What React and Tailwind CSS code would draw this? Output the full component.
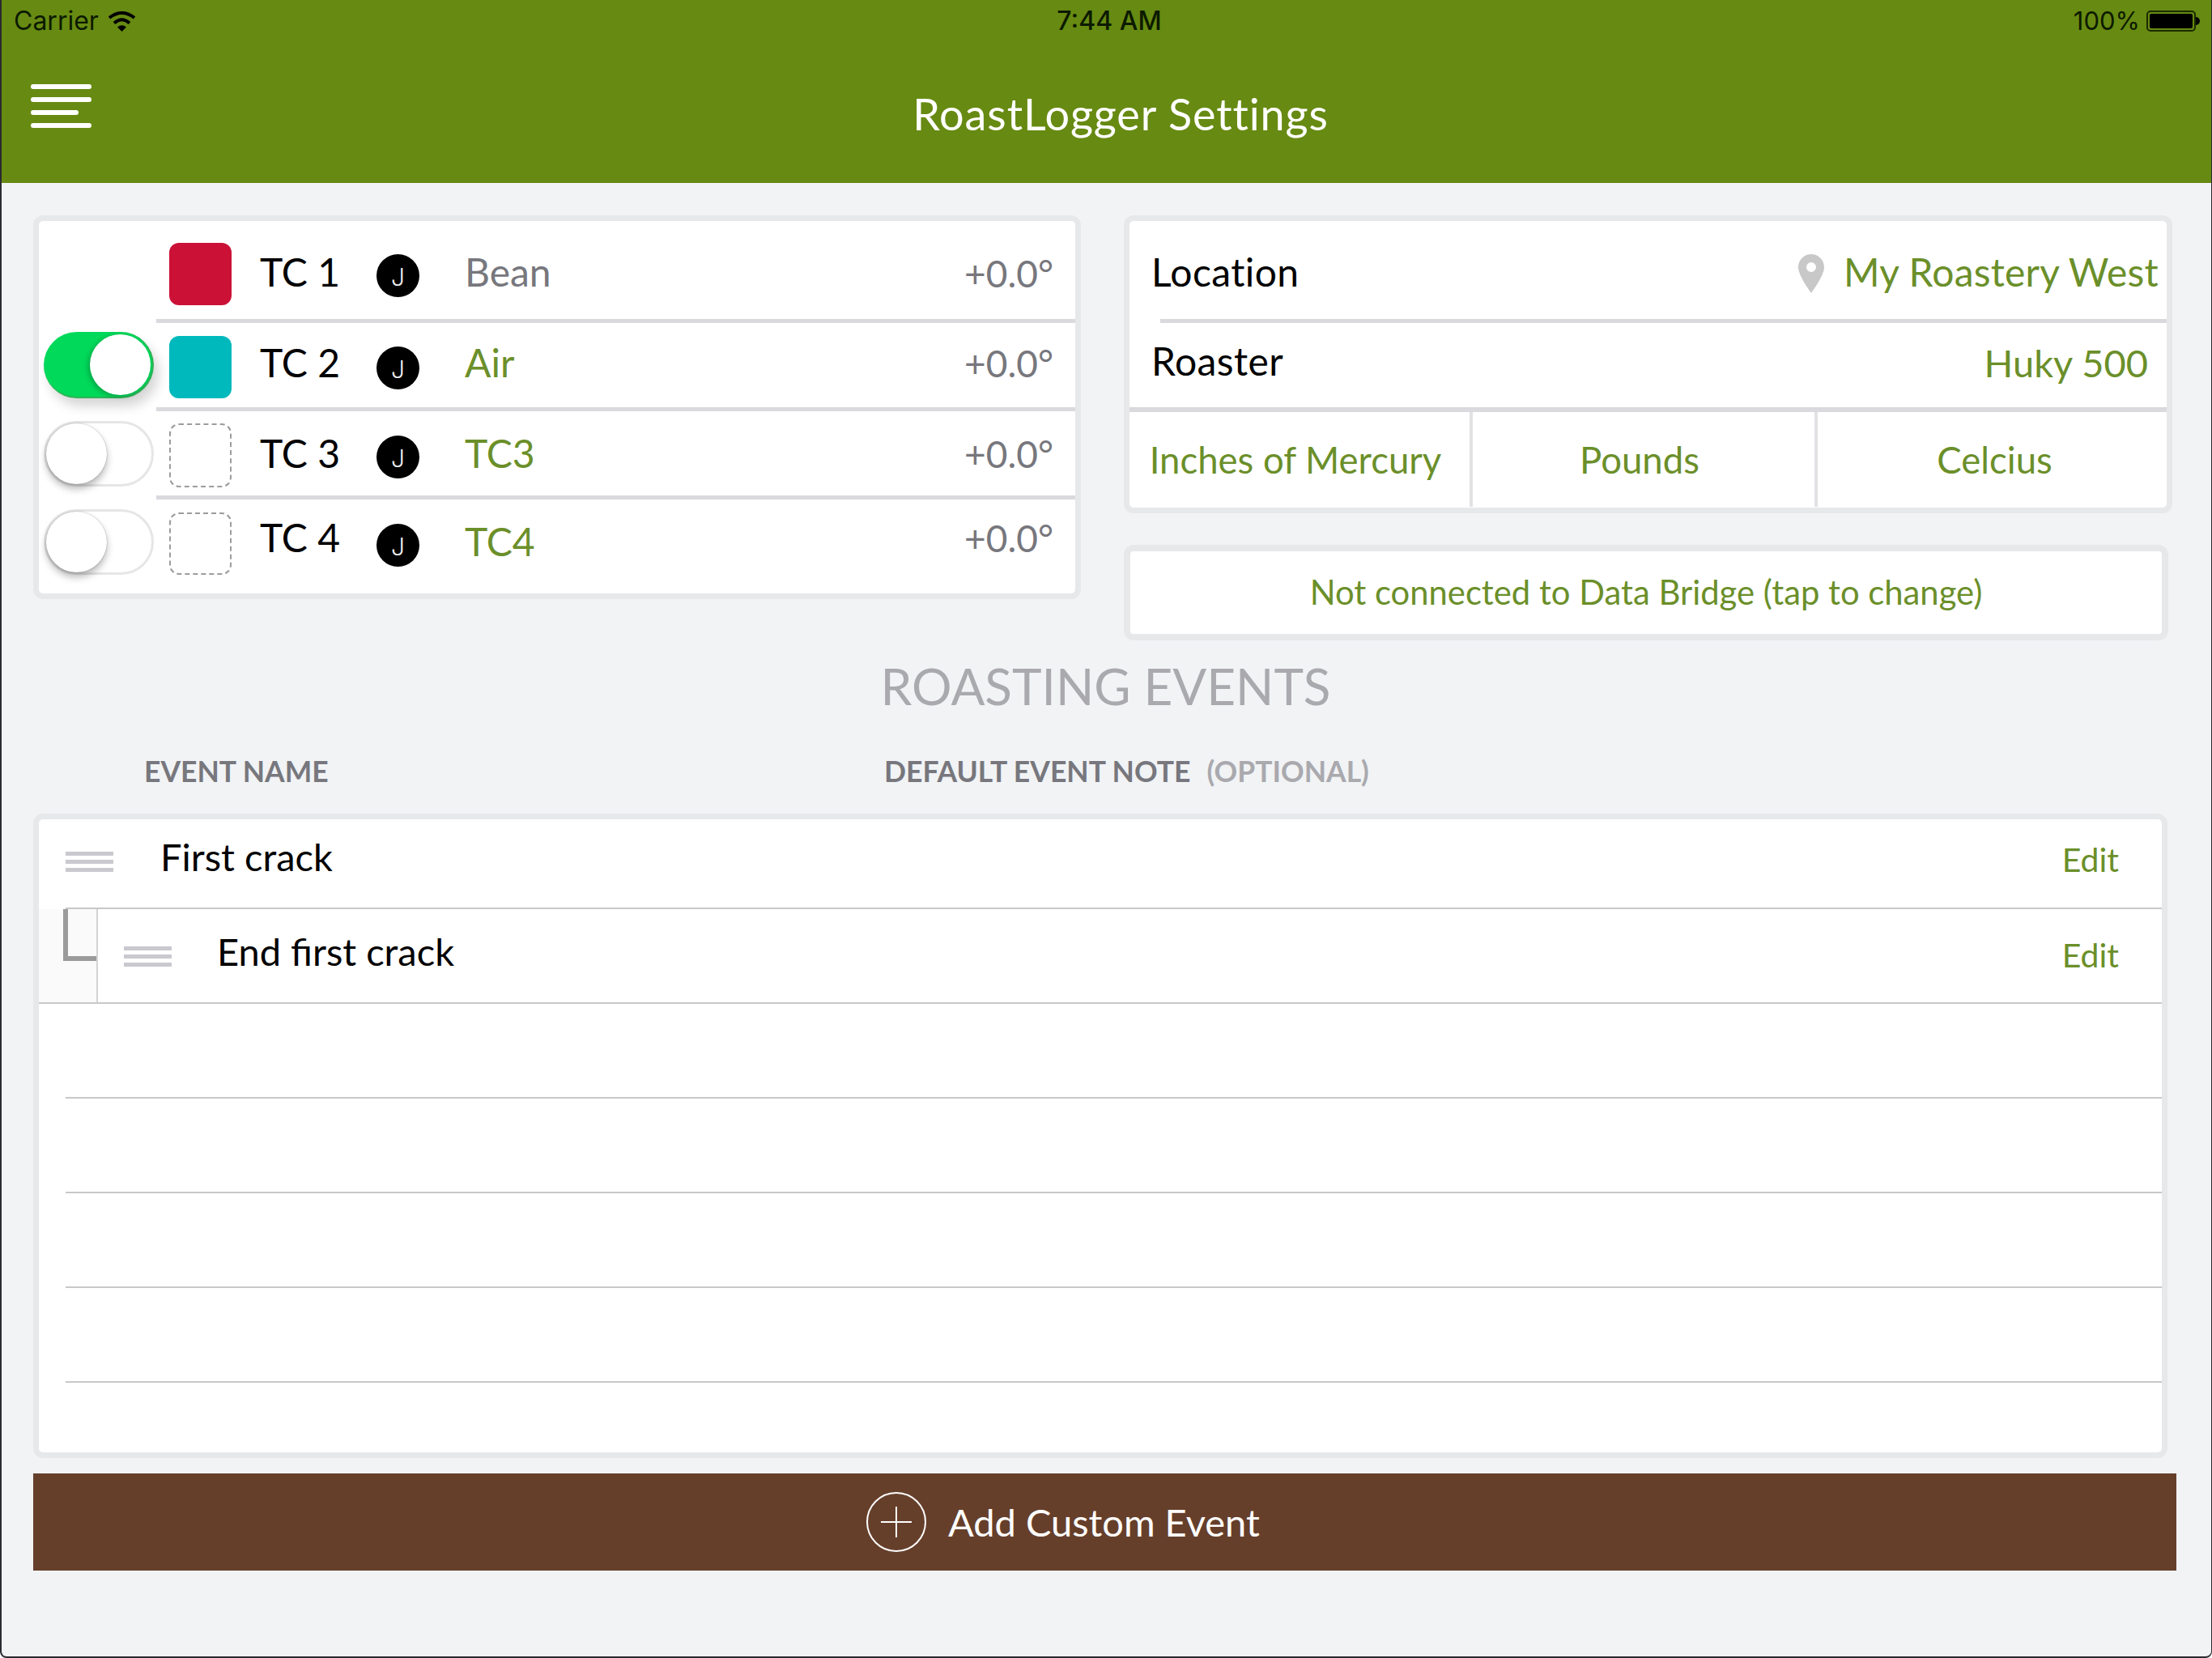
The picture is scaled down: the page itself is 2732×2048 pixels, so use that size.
const AV = "font-['Lato','Liberation_Sans',sans-serif]";

const rows = [
  { h: "h-[121px]", sw: null, swT: "", sq: "mt-[27px] h-[77px] bg-[#cb1136]", txt: "mt-[33px]", j: "mt-[41px]", name: "Bean", nameC: "text-[#77777d]", nameT: "mt-[33px]", val: "mt-[35px]", label: "TC 1" },
  { h: "h-[104px]", sw: true, swT: "mt-[11px]", sq: "mt-[16px] h-[77px] bg-[#00b9bc]", txt: "mt-[19px]", j: "mt-[29px]", name: "Air", nameC: "text-[#6b8f2a]", nameT: "mt-[19px]", val: "mt-[20px]", label: "TC 2" },
  { h: "h-[104px]", sw: false, swT: "mt-[12px]", sq: "mt-[15px] h-[79px] border-2 border-dashed border-[#9c9c9c]", txt: "mt-[22px]", j: "mt-[30px]", name: "TC3", nameC: "text-[#6b8f2a]", nameT: "mt-[22px]", val: "mt-[23px]", label: "TC 3" },
  { h: "h-[115px]", sw: false, swT: "mt-[12px]", sq: "mt-[16px] h-[77px] border-2 border-dashed border-[#9c9c9c]", txt: "mt-[17px]", j: "mt-[30px]", name: "TC4", nameC: "text-[#6b8f2a]", nameT: "mt-[22px]", val: "mt-[18px]", label: "TC 4" },
];

function Toggle({ on, className }) {
  if (on) {
    return (
      <div className={`w-[136px] h-[82px] shrink-0 rounded-full bg-[#00d95a] border-r-2 border-b-2 border-[#2fb457] flex justify-end items-center pr-[2px] shadow-[6px_10px_14px_rgba(0,0,0,0.16)] ${className}`}>
        <div className="w-[75px] h-[75px] rounded-full bg-white shadow-[-2px_2px_6px_rgba(0,0,0,0.25)]" />
      </div>
    );
  }
  return (
    <div className={`w-[136px] h-[81px] shrink-0 rounded-full bg-white border-[3px] border-[#e6e6e6] flex items-center ${className}`}>
      <div className="w-[75px] h-[75px] rounded-full bg-white shadow-[0_6px_10px_rgba(0,0,0,0.28),0_0_2px_rgba(0,0,0,0.3)]" />
    </div>
  );
}

function Handle({ className }) {
  return (
    <div className={`w-[59px] flex flex-col gap-[5px] shrink-0 ${className}`}>
      <div className="h-[5px] bg-[#c9c9cf]" />
      <div className="h-[5px] bg-[#c9c9cf]" />
      <div className="h-[5px] bg-[#c9c9cf]" />
    </div>
  );
}

function Divider({ className }) {
  return <div className={`h-[5px] bg-[#d9d9de] ${className}`} />;
}

function ChannelPanel() {
  return (
    <div className="w-[1294px] h-[474px] shrink-0 rounded-xl border-[7px] border-[#e7e8ea] bg-white overflow-hidden">
      {rows.map((r, i) => (
        <div key={r.label}>
          <div className={`${r.h} flex items-start`}>
            <div className="w-[142px] pl-[6px] shrink-0">
              {r.sw !== null && <Toggle on={r.sw} className={r.swT} />}
            </div>
            <div className={`ml-[19px] w-[77px] shrink-0 rounded-xl ${r.sq}`} />
            <div className={`ml-[35px] w-[144px] shrink-0 text-[48px] leading-[60px] text-black ${r.txt}`}>{r.label}</div>
            <div className={`w-[53px] h-[53px] shrink-0 rounded-full bg-black text-[#eeeeee] flex items-center justify-center pt-[3px] text-[30px] font-['Inter',sans-serif] font-light ${r.j}`}>J</div>
            <div className={`ml-[56px] flex-1 text-[48px] leading-[60px] ${r.nameC} ${r.nameT}`}>{r.name}</div>
            <div className={`mr-[27px] text-[46px] leading-[60px] text-[#77777d] ${r.val}`}>+0.0°</div>
          </div>
          {i < 3 && <Divider className="ml-[145px]" />}
        </div>
      ))}
    </div>
  );
}

function SettingsPanel() {
  return (
    <div className="w-[1295px] h-[368px] rounded-xl border-[7px] border-[#e7e8ea] bg-white overflow-hidden">
      <div className="h-[121px] flex items-start">
        <div className="ml-[27px] mt-[33px] text-[48px] tracking-[0.4px] leading-[60px] text-black">Location</div>
        <svg className="ml-auto mt-[41px] w-[32px] h-[48px]" viewBox="0 0 32 48">
          <path fillRule="evenodd" fill="#c8c8c8" d="M16 0C7 0 0 7 0 16c0 9 11 25 16 32 5-7 16-23 16-32C32 7 25 0 16 0Zm0 10a6 6 0 1 1 0 12 6 6 0 0 1 0-12Z" />
        </svg>
        <div className="ml-[24px] mr-[10px] mt-[33px] text-[48px] tracking-[0.2px] leading-[60px] text-[#6b8f2a]">My Roastery West</div>
      </div>
      <Divider className="ml-[38px]" />
      <div className="h-[104px] flex items-start justify-between">
        <div className="ml-[27px] mt-[17px] text-[48px] tracking-[0.4px] leading-[60px] text-black">Roaster</div>
        <div className="mr-[23px] mt-[19px] text-[47px] leading-[60px] text-[#6b8f2a]">Huky 500</div>
      </div>
      <div className="h-[6px] bg-[#d9d9de]" />
      <div className="flex h-[117px] text-[45.500px] leading-[60px] text-[#6b8f2a] text-center">
        <div className="w-[420px] pt-[29px] pr-[10px]">Inches of Mercury</div>
        <div className="w-[4px] bg-[#e2e2e5]" />
        <div className="w-[422px] pt-[29px] pr-[10px]">Pounds</div>
        <div className="w-[4px] bg-[#e2e2e5]" />
        <div className="flex-1 pt-[29px] pl-[6px]">Celcius</div>
      </div>
    </div>
  );
}

export default function App() {
  return (
    <div className={`w-[2732px] h-[2048px] bg-[#f1f3f5] border-l-2 border-r border-b-2 border-[#2a2a30] rounded-b-lg overflow-hidden flex flex-col ${AV}`}>
      <header className="h-[226px] shrink-0 bg-[#678a12] flex flex-col">
        <div className="h-[52px] grid grid-cols-3 items-center text-[32px] text-[#0c1a00] font-['Inter',sans-serif] pl-[15px] pr-[14px]">
          <div className="flex items-center gap-[12px]">
            <span>Carrier</span>
            <svg className="w-[33px] h-[25px]" viewBox="0 0 33 25" fill="none" stroke="#000">
              <path strokeWidth="4" d="M1 8Q16.5-4 32 8" />
              <path strokeWidth="4" d="M7 14.500Q16.500 6 26 14.500" />
              <path fill="#000" stroke="none" d="M11 19.500Q16.500 15 22 19.500L16.500 25Z" />
            </svg>
          </div>
          <div className="text-center font-medium pl-[6px]">7:44 AM</div>
          <div className="flex items-center justify-end gap-[8px]">
            <span className="text-[31px]">100%</span>
            <div className="flex items-center">
              <div className="w-[61px] h-[26px] rounded-[5px] border-2 border-[#1c2a00] p-[2px]">
                <div className="w-full h-full rounded-[2px] bg-black" />
              </div>
              <div className="w-[5px] h-[10px] rounded-r-full bg-black" />
            </div>
          </div>
        </div>
        <div className="flex items-start">
          <div className="ml-[36px] mt-[52px] w-[75px] flex flex-col gap-[10.500px] shrink-0">
            <div className="h-[5.500px] rounded-full bg-white" />
            <div className="h-[5.500px] rounded-full bg-white" />
            <div className="h-[5.500px] w-[59px] rounded-full bg-white" />
            <div className="h-[5.500px] rounded-full bg-white" />
          </div>
          <div className="flex-1 text-center text-white text-[54px] leading-[70px] tracking-[0.9px] mt-[54px] pr-[76px]">RoastLogger Settings</div>
        </div>
      </header>

      <div className="flex items-start pl-[39px] pt-[40px] h-[565px] shrink-0">
        <ChannelPanel />
        <div className="ml-[53px] flex flex-col">
          <SettingsPanel />
          <div className="mt-[39px] w-[1290px] h-[118px] rounded-xl border-[8px] border-[#e7e8ea] bg-white flex items-center justify-center text-[41.800px] text-[#6b8f2a] pb-[2px]">
            Not connected to Data Bridge (tap to change)
          </div>
        </div>
      </div>

      <div className="mt-[16px] text-center text-[62px] leading-[80px] text-[#a9a9ae] pr-[2px]">ROASTING EVENTS</div>

      <div className="mt-[46px] h-[40px] flex items-center text-[35.500px] font-bold text-[#77777d]">
        <div className="ml-[176px] w-[914px]">EVENT NAME</div>
        <div>DEFAULT EVENT NOTE</div>
        <div className="ml-[20px] text-[#a9a9ae]">(OPTIONAL)</div>
      </div>

      <div className="mt-[32px] ml-[39px] w-[2636px] h-[796px] rounded-xl border-[7px] border-[#e7e8ea] bg-white overflow-hidden shrink-0">
        <div className="h-[109px] flex items-start">
          <Handle className="ml-[33px] mt-[40px]" />
          <div className="ml-[58px] mt-[16px] flex-1 text-[47px] leading-[60px] text-black">First crack</div>
          <div className="mr-[53px] mt-[20px] text-[41px] leading-[60px] text-[#6b8f2a]">Edit</div>
        </div>
        <div className="h-[2px] ml-[33px] bg-[#c8c8c8]" />
        <div className="h-[115px] flex items-start">
          <div className="w-[73px] h-full shrink-0 bg-[#fafafa] border-r-2 border-[#d4d4d4]">
            <div className="ml-[30px] h-[64px] border-l-[6px] border-b-[6px] border-[#9b9b9b]" />
          </div>
          <Handle className="ml-[32px] mt-[46px]" />
          <div className="ml-[56px] mt-[22px] flex-1 text-[47px] leading-[60px] text-black">End first crack</div>
          <div className="mr-[53px] mt-[27px] text-[41px] leading-[60px] text-[#6b8f2a]">Edit</div>
        </div>
        <div className="h-[2px] bg-[#c8c8c8]" />
        {[0, 1, 2, 3].map((k) => (
          <div key={k}>
            <div className="h-[115px]" />
            <div className="h-[2px] ml-[33px] bg-[#c8c8c8]" />
          </div>
        ))}
      </div>

      <div className="mt-[19px] ml-[39px] w-[2647px] h-[120px] shrink-0 bg-[#663f2b] flex items-center pl-[1029px]">
        <svg className="w-[74px] h-[74px] shrink-0" viewBox="0 0 74 74" fill="none" stroke="#fff" strokeWidth="2">
          <circle cx="37" cy="37" r="36" />
          <path d="M18 37H56M37 18V56" />
        </svg>
        <div className="ml-[27px] text-[47px] leading-[60px] text-white">Add Custom Event</div>
      </div>
    </div>
  );
}
